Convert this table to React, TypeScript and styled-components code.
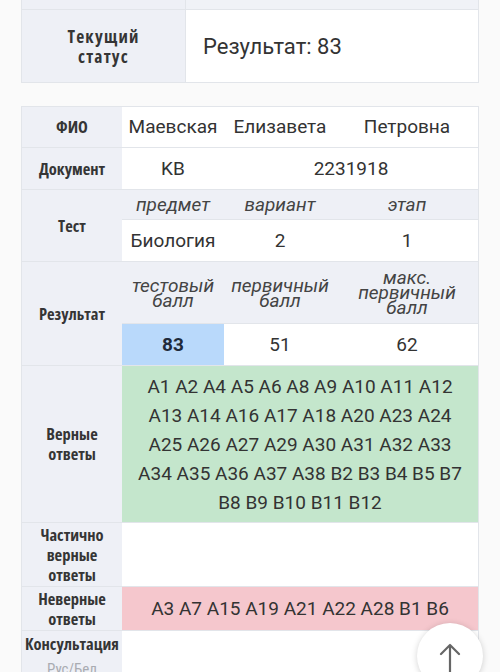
import React from "react";
import styled, { createGlobalStyle } from "styled-components";

const GlobalStyle = createGlobalStyle`
  html, body { margin: 0; padding: 0; background: #fafafa; }
  body { font-family: Roboto, "Noto Sans", Arial, sans-serif; color: #333; }
  * { box-sizing: border-box; }
`;

const LINE = "#e2e5ea";
const LABEL_BG = "#eef0f6";
const LABEL_FONT = `"Open Sans", "DejaVu Sans", sans-serif`;

const Page = styled.div`
  width: 500px;
  height: 672px;
  overflow: hidden;
  padding: 0 21px;
  display: flex;
  flex-direction: column;
  gap: 23px;
`;

const StatusTable = styled.div`
  width: 458px;
  display: grid;
  grid-template-columns: 164px 1fr;
  grid-template-rows: 10px 73px;
  border-left: 1px solid ${LINE};
  border-right: 1px solid ${LINE};
`;

const StatusLabel = styled.div`
  background: ${LABEL_BG};
  border-bottom: 1px solid ${LINE};
  border-right: 1px solid ${LINE};
  display: flex;
  align-items: center;
  justify-content: center;
  text-align: center;
  font-family: ${LABEL_FONT};
  font-stretch: 75%;
  font-weight: bold;
  font-size: 17.5px;
  line-height: 20px;
  letter-spacing: 1.2px;
  color: #353535;
`;

const StatusValue = styled.div<{ $muted?: boolean }>`
  background: ${(p) => (p.$muted ? "#f0f2f7" : "#fff")};
  border-bottom: 1px solid ${LINE};
  display: flex;
  align-items: center;
  padding-left: 17px;
  font-size: 22px;
  color: #333;
`;

const Grid = styled.div`
  width: 458px;
  display: grid;
  grid-template-columns: 100px 102px 112px 1fr;
  grid-template-rows: 41px 42px 30px 42px 62px 42px 157px 64px 44px 60px;
  border: 1px solid ${LINE};
  border-bottom: none;
`;

const Label = styled.div<{ $span?: number; $top?: boolean }>`
  grid-row: span ${(p) => p.$span ?? 1};
  background: ${LABEL_BG};
  border-bottom: 1px solid ${LINE};
  display: flex;
  flex-direction: column;
  align-items: center;
  justify-content: ${(p) => (p.$top ? "flex-start" : "center")};
  padding-top: ${(p) => (p.$top ? "3px" : "0")};
  text-align: center;
  font-family: ${LABEL_FONT};
  font-stretch: 75%;
  font-weight: bold;
  font-size: 16.5px;
  line-height: 20px;
  color: #353535;
`;

const Sub = styled.span`
  font-weight: normal;
  color: #a9acb2;
  font-size: 15px;
  font-family: Roboto, sans-serif;
  margin-top: 5px;
`;

type Tone = "white" | "head" | "blue" | "green" | "pink";
const toneBg: Record<Tone, string> = {
  white: "#fff",
  head: LABEL_BG,
  blue: "#b9d9fb",
  green: "#c4e6cc",
  pink: "#f5c7cd",
};

const Cell = styled.div<{ $span?: number; $tone?: Tone; $bold?: boolean }>`
  grid-column: span ${(p) => p.$span ?? 1};
  background: ${(p) => toneBg[p.$tone ?? "white"]};
  border-bottom: 1px solid ${LINE};
  display: flex;
  align-items: center;
  justify-content: center;
  text-align: center;
  font-size: 19px;
  line-height: 24px;
  font-weight: ${(p) => (p.$bold ? 700 : 400)};
  color: ${(p) => (p.$bold ? "#1f2a3a" : "#333")};
`;

const Head = styled(Cell)`
  font-style: italic;
  font-size: 19px;
  line-height: 15px;
  color: #444;
`;

const Answers = styled(Cell)`
  padding: 0 12px;
  line-height: 29px;
`;

const ScrollTop = styled.button`
  position: fixed;
  left: 417px;
  top: 623px;
  width: 66px;
  height: 66px;
  border-radius: 50%;
  border: none;
  background: #fff;
  box-shadow: 0 1px 6px rgba(0, 0, 0, 0.18);
  display: flex;
  align-items: flex-start;
  justify-content: center;
  padding: 20px 0 0;
`;

const correct =
  "A1 A2 A4 A5 A6 A8 A9 A10 A11 A12 A13 A14 A16 A17 A18 A20 A23 A24 A25 A26 A27 A29 A30 A31 A32 A33 A34 A35 A36 A37 A38 B2 B3 B4 B5 B7 B8 B9 B10 B11 B12";
const wrong = "A3 A7 A15 A19 A21 A22 A28 B1 B6";

export default function App() {
  return (
    <>
      <GlobalStyle />
      <Page>
        <StatusTable>
          <StatusLabel />
          <StatusValue $muted />
          <StatusLabel>
            Текущий
            <br />
            статус
          </StatusLabel>
          <StatusValue>Результат: 83</StatusValue>
        </StatusTable>

        <Grid>
          <Label>ФИО</Label>
          <Cell>Маевская</Cell>
          <Cell>Елизавета</Cell>
          <Cell>Петровна</Cell>

          <Label>Документ</Label>
          <Cell>KB</Cell>
          <Cell $span={2}>2231918</Cell>

          <Label $span={2}>Тест</Label>
          <Head $tone="head">предмет</Head>
          <Head $tone="head">вариант</Head>
          <Head $tone="head">этап</Head>
          <Cell>Биология</Cell>
          <Cell>2</Cell>
          <Cell>1</Cell>

          <Label $span={2}>Результат</Label>
          <Head $tone="head">
            тестовый
            <br />
            балл
          </Head>
          <Head $tone="head">
            первичный
            <br />
            балл
          </Head>
          <Head $tone="head">
            макс.
            <br />
            первичный
            <br />
            балл
          </Head>
          <Cell $tone="blue" $bold>
            83
          </Cell>
          <Cell>51</Cell>
          <Cell>62</Cell>

          <Label>
            Верные
            <br />
            ответы
          </Label>
          <Answers $span={3} $tone="green">
            {correct}
          </Answers>

          <Label>
            Частично
            <br />
            верные
            <br />
            ответы
          </Label>
          <Cell $span={3} />

          <Label>
            Неверные
            <br />
            ответы
          </Label>
          <Answers $span={3} $tone="pink">
            {wrong}
          </Answers>

          <Label $top>
            Консультация
            <Sub>Рус/Бел</Sub>
          </Label>
          <Cell $span={3} />
        </Grid>
      </Page>
      <ScrollTop aria-label="Наверх">
        <svg width="24" height="30" viewBox="0 0 24 30" fill="none">
          <path
            d="M12 2 V30 M3 11 L12 2 L21 11"
            stroke="#666"
            strokeWidth="2.2"
            strokeLinecap="round"
            strokeLinejoin="round"
          />
        </svg>
      </ScrollTop>
    </>
  );
}
